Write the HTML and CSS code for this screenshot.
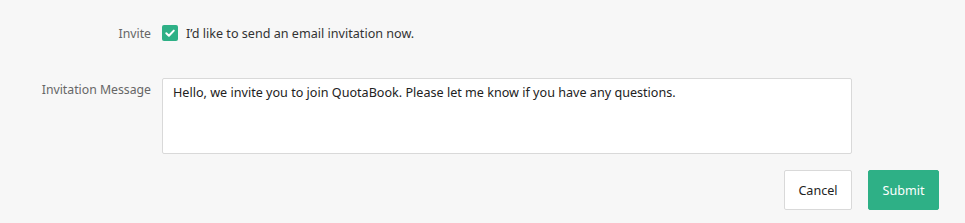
FILE: index.html
```html
<!DOCTYPE html>
<html>
<head>
<meta charset="utf-8">
<link rel="stylesheet" href="styles.css">
</head>
<body>
<form class="form">
  <div class="row row-invite">
    <div class="label label-invite">Invite</div>
    <div class="field field-check">
      <span class="check">
        <svg width="16" height="16" viewBox="0 0 16 16"><path d="M4.3 8.2 L6.9 10.7 L11.8 5.6" fill="none" stroke="#fff" stroke-width="2" stroke-linecap="round" stroke-linejoin="round"/></svg>
      </span>
      <span class="check-text">I’d like to send an email invitation now.</span>
    </div>
  </div>
  <div class="row row-msg">
    <div class="label label-msg">Invitation Message</div>
    <div class="field">
      <textarea class="message">Hello, we invite you to join QuotaBook. Please let me know if you have any questions.</textarea>
    </div>
  </div>
  <div class="actions">
    <button type="button" class="btn btn-cancel">Cancel</button>
    <button type="button" class="btn btn-submit">Submit</button>
  </div>
</form>
</body>
</html>
```
FILE: styles.css
```css
html, body {
  margin: 0;
  padding: 0;
  background: #f7f7f7;
}
body {
  font-family: "Noto Sans", "Open Sans", sans-serif;
  font-size: 12.6px;
  color: #333;
}
.form {
  width: 939px;
  padding-top: 25px;
  display: flex;
  flex-direction: column;
}
.row {
  display: grid;
  grid-template-columns: 151px 690px;
  column-gap: 11px;
}
.row-invite {
  height: 16px;
}
.row-msg {
  margin-top: 37px;
}
.label {
  text-align: right;
  color: #666;
  font-size: 12.25px;
  line-height: 16px;
}
.label-invite {
  padding-top: 1px;
}
.label-msg {
  padding-top: 4px;
}
.field-check {
  display: flex;
  align-items: flex-start;
  gap: 8px;
  height: 16px;
}
.check {
  width: 16px;
  height: 16px;
  border-radius: 2px;
  background: #2eb086;
  display: flex;
}
.check-text {
  color: #333;
  line-height: 16px;
  padding-top: 1px;
}
.message {
  display: block;
  box-sizing: border-box;
  width: 690px;
  height: 76px;
  margin: 0;
  padding: 5px 10px 4px;
  border: 1px solid #d9d9d9;
  border-radius: 2px;
  background: #fff;
  font-family: inherit;
  font-size: 12.6px;
  line-height: 18px;
  color: #222;
  resize: none;
  outline: none;
}
.actions {
  display: flex;
  justify-content: flex-end;
  gap: 16px;
  margin-top: 16px;
}
.btn {
  height: 40px;
  box-sizing: border-box;
  border-radius: 2px;
  font-family: inherit;
  font-size: 12.6px;
  cursor: pointer;
}
.btn-cancel {
  width: 68px;
  background: #fff;
  border: 1px solid #d9d9d9;
  color: #222;
}
.btn-submit {
  width: 71px;
  background: #2eb086;
  border: 1px solid #2eb086;
  color: #fff;
}
```
